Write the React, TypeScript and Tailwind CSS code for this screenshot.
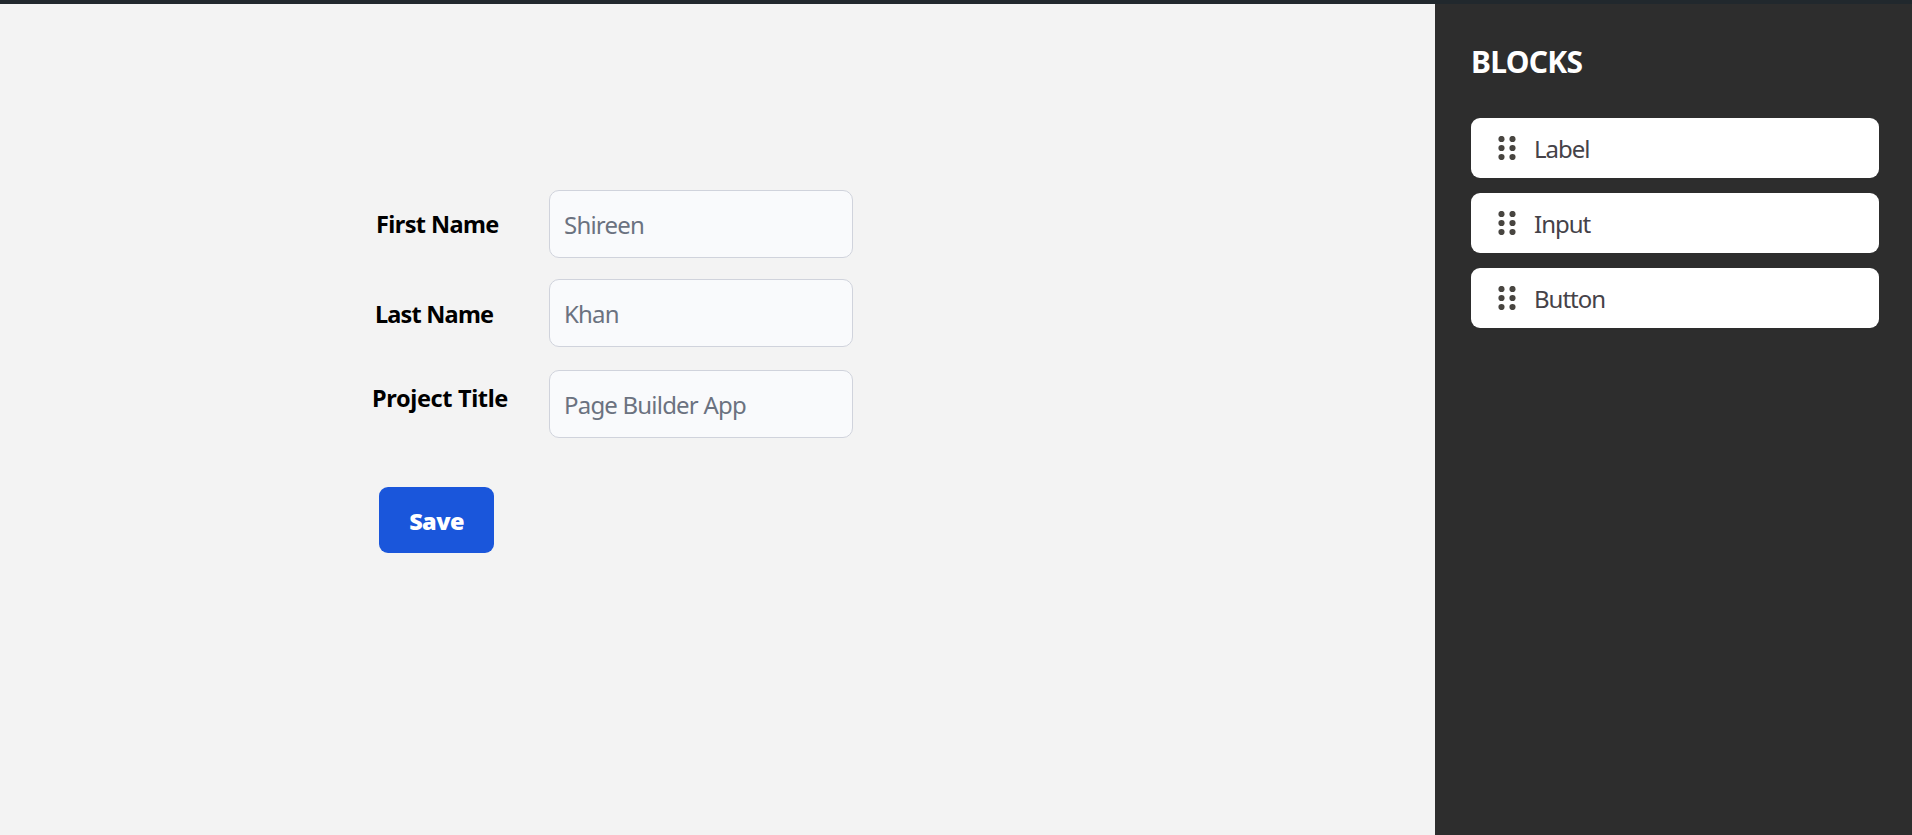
const blocks = ['Label', 'Input', 'Button'];

function DragHandle() {
  return (
    <svg className="h-6 w-[18px] shrink-0" viewBox="0 0 18 24" fill="#484540">
      {[3, 12, 21].map((cy) => (
        <g key={cy}>
          <circle cx="3.5" cy={cy} r="3.1" />
          <circle cx="14.5" cy={cy} r="3.1" />
        </g>
      ))}
    </svg>
  );
}

const inputClass =
  'h-[68px] w-[304px] rounded-[10px] border border-[#d0d3dc] bg-[#f9fafc] pl-[14px] pr-3 text-[24px] tracking-[-0.8px] text-gray-500 placeholder:text-[#6b7280] outline-none';

export default function App() {
  return (
    <div className="flex h-[835px] w-full flex-col overflow-hidden bg-[#f3f3f3] font-['Noto_Sans','Open_Sans',sans-serif]">
      <div className="h-1 shrink-0 bg-[#21282d]" />
      <div className="flex min-h-0 flex-1">
        <main className="flex flex-1 flex-col items-start pl-[372px] pt-[186px] text-black">
          <div className="flex h-[68px] items-center">
            <label className="w-[177px] pl-[4px] text-[23.5px] font-bold leading-8 tracking-[-0.6px] whitespace-nowrap">First Name</label>
            <input className={inputClass} placeholder="Shireen" />
          </div>
          <div className="mt-[21px] flex h-[68px] items-center">
            <label className="w-[177px] pl-[3px] pt-0.5 text-[23.5px] font-bold leading-8 tracking-[-0.8px] whitespace-nowrap">Last Name</label>
            <input className={inputClass} placeholder="Khan" />
          </div>
          <div className="mt-[23px] flex h-[68px] items-start">
            <label className="w-[177px] pt-[12px] text-[23.5px] font-bold leading-8 tracking-[-0.35px] whitespace-nowrap">Project Title</label>
            <input className={inputClass} placeholder="Page Builder App" />
          </div>
          <button className="ml-[7px] mt-[49px] flex h-[66px] w-[115px] items-center justify-center rounded-[9px] bg-[#1a56db] pt-[3px] text-[23.5px] font-black tracking-[-0.6px] text-white">
            Save
          </button>
        </main>
        <aside className="flex w-[477px] shrink-0 flex-col bg-[#2d2d2d] pl-9 pr-[33px] pt-[38px]">
          <h2 className="text-[30px] font-bold leading-10 tracking-[-0.7px] text-white">BLOCKS</h2>
          <ul className="mt-9 flex flex-col gap-[15px]">
            {blocks.map((name) => (
              <li key={name} className="flex h-[60px] items-center rounded-[9px] bg-white pl-[27px] text-[24px] tracking-[-1px] text-[#454248]">
                <DragHandle />
                <span className="ml-[18px] pt-0.5">{name}</span>
              </li>
            ))}
          </ul>
        </aside>
      </div>
    </div>
  );
}
